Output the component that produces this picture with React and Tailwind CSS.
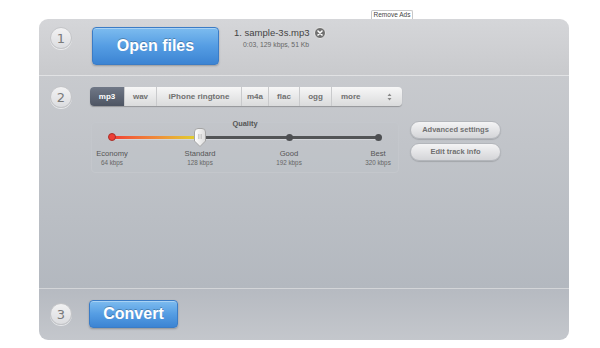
import React from "react";

const tabs = [
  { label: "mp3", w: "w-[35px]", active: true },
  { label: "wav", w: "w-[32px]" },
  { label: "iPhone ringtone", w: "w-[85px]" },
  { label: "m4a", w: "w-[27px]" },
  { label: "flac", w: "w-[31px]" },
  { label: "ogg", w: "w-[32px]" },
];

const marks = [
  { name: "Economy", rate: "64 kbps", ml: "ml-0" },
  { name: "Standard", rate: "128 kbps", ml: "ml-[48px]" },
  { name: "Good", rate: "192 kbps", ml: "ml-[49px]" },
  { name: "Best", rate: "320 kbps", ml: "ml-[49px]" },
];

function Step({ n }) {
  return (
    <div className="flex h-[22px] w-[22px] flex-none items-center justify-center rounded-full border border-[#c4c5c8] bg-gradient-to-b from-[#f2f2f3] to-[#dcdde0] font-['DejaVu_Sans',sans-serif] text-[13px] leading-none text-[#7a7a7a] shadow-[0_1px_0_rgba(255,255,255,0.6)]">
      {n}
    </div>
  );
}

function BlueButton({ children, className }) {
  return (
    <button
      className={`flex flex-none items-center justify-center rounded-[4px] border border-[#3b7cc6] bg-gradient-to-b from-[#7dbcef] via-[#559de3] to-[#3c84d3] font-bold text-[16px] text-white shadow-[0_1px_2px_rgba(0,0,0,0.25),inset_0_1px_0_rgba(255,255,255,0.35)] [text-shadow:0_-1px_0_rgba(0,0,0,0.25)] ${className}`}
    >
      {children}
    </button>
  );
}

function PillButton({ children }) {
  return (
    <button className="flex h-[18px] w-[91px] items-center justify-center rounded-full border border-[#b3b6bb] bg-gradient-to-b from-[#f4f4f5] to-[#d4d5d8] text-[7.5px] font-bold text-[#707070] shadow-[0_1px_1px_rgba(0,0,0,0.15)]">
      {children}
    </button>
  );
}

function Thumb() {
  return (
    <svg className="absolute left-[102px] top-[5px]" width="12" height="19" viewBox="0 0 12 19">
      <defs>
        <linearGradient id="th" x1="0" y1="0" x2="1" y2="0">
          <stop offset="0" stopColor="#ffffff" />
          <stop offset="1" stopColor="#dcdcdc" />
        </linearGradient>
      </defs>
      <path d="M0.5 4 Q0.5 0.5 4 0.5 H8 Q11.5 0.5 11.5 4 V13 L6 18.5 L0.5 13 Z" fill="url(#th)" stroke="#a5a5a5" strokeWidth="1" />
      <path d="M4.5 6 V11 M6 6 V11 M7.5 6 V11" stroke="#c2c2c2" strokeWidth="0.8" />
    </svg>
  );
}

export default function App() {
  return (
    <div className="h-[348px] w-[600px] overflow-hidden bg-white font-['Liberation_Sans',Arial,sans-serif]">
      <div className="flex h-[19px] items-end pl-[371px]">
        <div className="h-[9px] w-[42px] rounded-t-[2px] border border-b-0 border-[#c8c8c8] bg-white text-center text-[6.5px] leading-[8px] text-[#444]">
          Remove Ads
        </div>
      </div>

      <div className="ml-[39px] flex h-[321px] w-[530px] flex-col overflow-hidden rounded-[9px]">
        {/* step 1 */}
        <div className="flex h-[56px] items-start bg-gradient-to-b from-[#d5d6d9] to-[#c9cacd] pl-[11px] pt-[8px]">
          <Step n="1" />
          <BlueButton className="ml-[20px] h-[38px] w-[127px]">Open files</BlueButton>
          <div className="ml-[15px]">
            <div className="flex h-[12px] items-center">
              <span className="text-[9.5px] text-[#444]">1. sample-3s.mp3</span>
              <svg className="ml-[4px]" width="12" height="12" viewBox="0 0 12 12">
                <circle cx="6" cy="6" r="5.5" fill="#707070" stroke="#e6e6e6" strokeWidth="1" />
                <path d="M4 4 L8 8 M8 4 L4 8" stroke="#fff" strokeWidth="1.6" strokeLinecap="round" />
              </svg>
            </div>
            <div className="pl-[9px] text-[6.8px] leading-[11px] text-[#666]">0:03, 129 kbps, 51 Kb</div>
          </div>
        </div>
        <div className="h-px bg-[#e1e2e4]" />

        {/* step 2 */}
        <div className="flex h-[212px] items-start bg-gradient-to-b from-[#c8cace] to-[#b3b8bf] pl-[11px] pt-[10px]">
          <Step n="2" />
          <div className="ml-[18px] mt-[1px] flex flex-col">
            <div className="flex h-[19px] w-[312px] overflow-hidden rounded-[4px] bg-gradient-to-b from-[#f7f7f7] to-[#dadbdc] shadow-[0_1px_1px_rgba(0,0,0,0.25)]">
              {tabs.map((t) => (
                <div
                  key={t.label}
                  className={`flex h-full items-center justify-center border-r border-[#c9cacc] text-[8px] font-bold ${t.w} ${
                    t.active
                      ? "bg-gradient-to-b from-[#707887] to-[#4e5563] text-white"
                      : "text-[#707070]"
                  }`}
                >
                  {t.label}
                </div>
              ))}
              <div className="flex h-full w-[70px] items-center justify-between pl-[9px] pr-[10px] text-[8px] font-bold text-[#707070]">
                <span>more</span>
                <svg width="5" height="8" viewBox="0 0 5 8">
                  <path d="M2.5 0.5 L4.5 3 H0.5 Z M2.5 7.5 L4.5 5 H0.5 Z" fill="#8a8a8a" />
                </svg>
              </div>
            </div>

            <div className="mt-[15px] flex items-start">
              <div className="relative ml-[1px] mt-[1px] h-[51px] w-[308px] rounded-[4px] border border-[#c4c7cc] bg-[#c0c3c8]/20">
                <div className="absolute inset-x-0 top-[-5px] text-center text-[7.4px] font-bold text-[#555]">Quality</div>
                <div className="relative h-[26px]">
                  <div className="absolute left-[20px] top-[13px] h-[3px] w-[88px] bg-gradient-to-r from-[#f03a35] via-[#ee8a3a] to-[#dcd62a]" />
                  <div className="absolute left-[108px] top-[13px] h-[3px] w-[178px] bg-[#525456]" />
                  <div className="absolute left-[20px] top-[16px] h-px w-[266px] bg-[#d3d5d9]" />
                  <div className="absolute left-[16px] top-[10px] h-[8px] w-[8px] rounded-full border border-[#a8302a] bg-[#ee3f35]" />
                  <div className="absolute left-[194px] top-[11px] h-[7px] w-[7px] rounded-full bg-[#4d4f52]" />
                  <div className="absolute left-[283px] top-[11px] h-[7px] w-[7px] rounded-full bg-[#4d4f52]" />
                  <Thumb />
                </div>
                <div className="flex">
                  {marks.map((m) => (
                    <div key={m.name} className={`w-[40px] text-center ${m.ml}`}>
                      <div className="whitespace-nowrap text-[7.6px] leading-[10px] text-[#555]">{m.name}</div>
                      <div className="whitespace-nowrap text-[6.3px] leading-[8px] text-[#666]">{m.rate}</div>
                    </div>
                  ))}
                </div>
              </div>
              <div className="ml-[11px] flex flex-col gap-[4px]">
                <PillButton>Advanced settings</PillButton>
                <PillButton>Edit track info</PillButton>
              </div>
            </div>
          </div>
        </div>
        <div className="h-px bg-[#d3d5d8]" />

        {/* step 3 */}
        <div className="flex h-[51px] items-start bg-gradient-to-b from-[#b6bac1] to-[#c4c7cc] pl-[11px] pt-[11px]">
          <div className="mt-[3px]">
            <Step n="3" />
          </div>
          <BlueButton className="ml-[17px] h-[28px] w-[89px]">Convert</BlueButton>
        </div>
      </div>
    </div>
  );
}
